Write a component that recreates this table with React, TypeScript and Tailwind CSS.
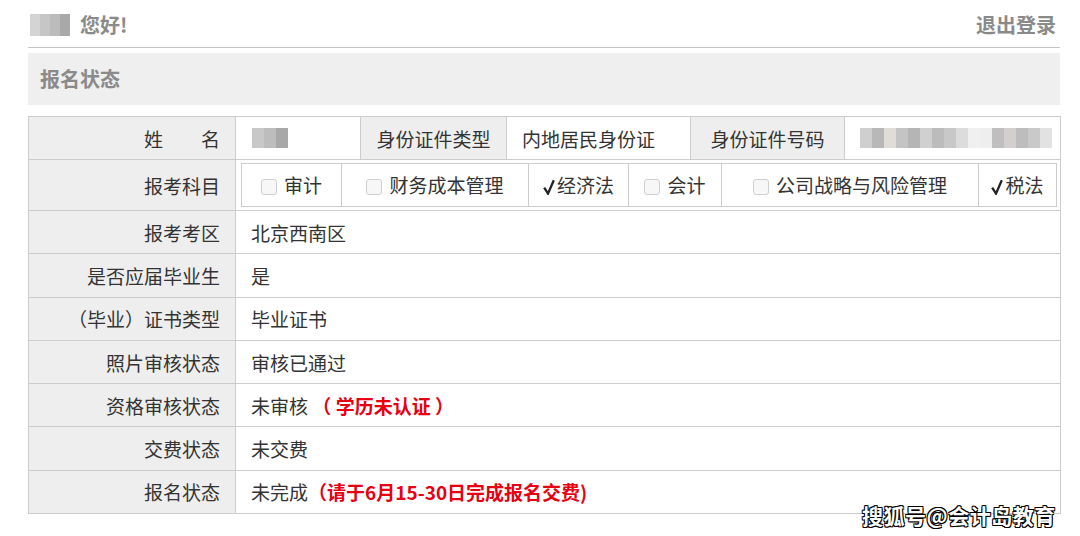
import React from "react";

const font = { fontFamily: '"Microsoft YaHei", "Noto Sans CJK SC", "Noto Sans", sans-serif' };

// pixelated placeholder for blurred-out personal info
const Blur = ({ shades, h = 20, w = 12 }: { shades: string[]; h?: number; w?: number }) => (
  <div className="flex">
    {shades.map((c, i) => (
      <div key={i} style={{ background: c, height: h, width: w }} />
    ))}
  </div>
);

const Check = () => (
  <span className="inline-block w-[16px] h-[16px] rounded-[3px] border border-[#cfcfcf] bg-[#f7f7f7] mr-[7px] align-[-2px]" />
);

const Tick = () => (
  <svg viewBox="0 0 12 16" className="inline-block w-[12px] h-[16px] mr-[2px] align-[-2px]">
    <path d="M1.2 8.6 L5 14.6 L10.8 1.2" fill="none" stroke="#222" strokeWidth="2.3" strokeLinejoin="miter" />
  </svg>
);

const subjects = [
  { name: "审计", checked: false },
  { name: "财务成本管理", checked: false },
  { name: "经济法", checked: true },
  { name: "会计", checked: false },
  { name: "公司战略与风险管理", checked: false },
  { name: "税法", checked: true },
];
const subjectWidths = ["w-[100px]", "w-[187px]", "w-[100px]", "w-[93px]", "w-[257px]", "w-[78px]"];

const Label = ({ children }: { children: React.ReactNode }) => (
  <td className="bg-[#eeeeee] border border-[#cccccc] text-right pr-[15px] whitespace-nowrap">{children}</td>
);

const rows: { label: string; value: React.ReactNode }[] = [
  { label: "报考考区", value: "北京西南区" },
  { label: "是否应届毕业生", value: "是" },
  { label: "（毕业）证书类型", value: "毕业证书" },
  { label: "照片审核状态", value: "审核已通过" },
  {
    label: "资格审核状态",
    value: (
      <>
        未审核<span className="font-bold text-[#e60012]"> （ 学历未认证 ）</span>
      </>
    ),
  },
  { label: "交费状态", value: "未交费" },
  {
    label: "报名状态",
    value: (
      <>
        未完成<span className="font-bold text-[#e60012]">（请于6月15-30日完成报名交费)</span>
      </>
    ),
  },
];

export default function App() {
  return (
    <div className="relative w-[1080px] h-[536px] bg-white pl-[28px] pr-[20px] text-[#333333]" style={font}>
      <div className="flex items-center justify-between h-[48px] border-b border-[#c4c4c4] pt-[2px]">
        <div className="flex items-center gap-[10px] pl-[2px]">
          <Blur shades={["#d4d4d4", "#c6c6c6", "#bcbcbc", "#a9a9a9"]} h={22} w={10} />
          <span className="text-[20px] font-bold text-[#8a8a8a]">您好!</span>
        </div>
        <span className="text-[20px] font-bold text-[#8a8a8a] pr-[4px]">退出登录</span>
      </div>
      <div className="mt-[5px] h-[52px] bg-[#efefef] flex items-center pl-[12px]">
        <span className="text-[20px] font-bold text-[#8a8a8a]">报名状态</span>
      </div>
      <table className="mt-[11px] w-[1032px] table-fixed border-collapse text-[19px] leading-none">
        <colgroup>
          <col className="w-[207px]" />
          <col className="w-[125px]" />
          <col className="w-[146px]" />
          <col className="w-[184px]" />
          <col className="w-[154px]" />
          <col className="w-[216px]" />
        </colgroup>
        <tbody>
          <tr className="h-[43px]">
            <Label>姓　　名</Label>
            <td className="border border-[#cccccc] pl-[16px]">
              <Blur shades={["#c8c8c8", "#bdbdbd", "#a8a8a8"]} />
            </td>
            <td className="bg-[#eeeeee] border border-[#cccccc] text-center">身份证件类型</td>
            <td className="border border-[#cccccc] pl-[15px] whitespace-nowrap">内地居民身份证</td>
            <td className="bg-[#eeeeee] border border-[#cccccc] text-center">身份证件号码</td>
            <td className="border border-[#cccccc] pl-[15px]">
              <Blur
                shades={["#cfcfcf", "#b8b8b8", "#e0ddd8", "#c4c4c4", "#b5b5b5", "#d0d0d0", "#bcbcbc", "#c8c8c8", "#dcdcdc", "#f0f0f0", "#eeeeee", "#bfbfbf", "#d3cfcf", "#bdbdbd", "#c9c9c9", "#e2e2e2"]}
              />
            </td>
          </tr>
          <tr className="h-[49px]">
            <Label>报考科目</Label>
            <td colSpan={5} className="border border-[#cccccc] px-[5px] py-[3px]">
              <table className="w-[815px] table-fixed border-collapse">
                <tbody>
                  <tr className="h-[43px]">
                    {subjects.map((s, i) => (
                      <td key={s.name} className={`${subjectWidths[i]} border border-[#cccccc] text-center whitespace-nowrap`}>
                        {s.checked ? <Tick /> : <Check />}
                        {s.name}
                      </td>
                    ))}
                  </tr>
                </tbody>
              </table>
            </td>
          </tr>
          {rows.map((r) => (
            <tr key={r.label} className="h-[43.3px]">
              <Label>{r.label}</Label>
              <td colSpan={5} className="border border-[#cccccc] pl-[15px] whitespace-nowrap">
                {r.value}
              </td>
            </tr>
          ))}
        </tbody>
      </table>
      <div className="absolute left-[862px] top-[500px] text-[21px] font-bold text-white tracking-[0.5px] [text-shadow:1px_1px_0_#000,-1px_-1px_0_#000,1px_-1px_0_#000,-1px_1px_0_#000,0_1px_0_#000,0_-1px_0_#000]">
        搜狐号@会计岛教育
      </div>
    </div>
  );
}
